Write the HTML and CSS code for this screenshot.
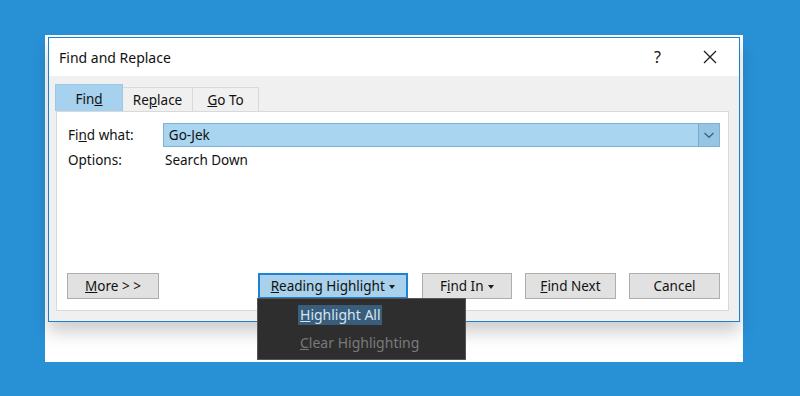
FILE: index.html
```html
<!DOCTYPE html>
<html lang="en">
<head>
    <meta charset="UTF-8">
    <title>Find and Replace</title>
    <link rel="stylesheet" href="styles.css">
</head>
<body>

<div class="canvas">
    <div class="dialog">
        <div class="titlebar">
            <span class="title">Find and Replace</span>
            <span class="help">?</span>
            <span class="close">
                <svg width="14" height="14" viewBox="0 0 14 14"><path d="M1 1L13 13M13 1L1 13" stroke="#1e1e1e" stroke-width="1.3" fill="none"/></svg>
            </span>
        </div>
        <div class="content">
            <div class="tabs">
                <div class="tab active">Fin<u>d</u></div>
                <div class="tab">Re<u>p</u>lace</div>
                <div class="tab"><u>G</u>o To</div>
            </div>
            <div class="panel">
                <div class="row">
                    <span class="label">Fi<u>n</u>d what:</span>
                    <div class="combo">
                        <span class="combo-text">Go-Jek</span>
                        <span class="combo-btn">
                            <svg width="12" height="8" viewBox="0 0 12 8"><path d="M1.5 2L6 6.2L10.5 2" stroke="#3b6584" stroke-width="1.4" fill="none"/></svg>
                        </span>
                    </div>
                </div>
                <div class="row options">
                    <span class="label">Options:</span>
                    <span>Search Down</span>
                </div>
                <div class="buttons">
                    <button class="btn more"><u>M</u>ore &gt; &gt;</button>
                    <div class="menu-wrap">
                        <button class="btn pressed"><u>R</u>eading Highlight <span class="caret"></span></button>
                        <div class="menu">
                            <div class="menu-item"><span class="hl"><u>H</u>ighlight All</span></div>
                            <div class="menu-item disabled"><u>C</u>lear Highlighting</div>
                        </div>
                    </div>
                    <button class="btn find-in">F<u>i</u>nd In <span class="caret"></span></button>
                    <button class="btn"><u>F</u>ind Next</button>
                    <button class="btn">Cancel</button>
                </div>
            </div>
        </div>
    </div>
</div>

</body>
</html>
```

FILE: styles.css
```css
body {
    margin: 0;
    background-color: #2891d6;
    font-family: "Noto Sans", "Open Sans", sans-serif;
    font-size: 13.5px;
    color: #111;
}
.canvas {
    margin: 35px 0 0 45px;
    width: 698px;
    height: 327px;
    background-color: white;
    padding: 2px 0 0 3px;
    box-sizing: border-box;
}
.dialog {
    width: 692px;
    height: 285px;
    box-sizing: border-box;
    border: 1px solid #1c7fd0;
    background-color: #f0f0f0;
    box-shadow: 0 10px 16px rgba(0, 0, 0, 0.2);
}
.titlebar {
    height: 38px;
    background-color: white;
    display: flex;
    align-items: center;
    padding-left: 10px;
}
.title {
    font-size: 14px;
    flex: 1;
}
.help {
    font-size: 16px;
    margin-right: 42px;
}
.close {
    display: flex;
    margin-right: 22px;
}
.content {
    padding: 8px 0 0 6px;
}
.tabs {
    display: flex;
    align-items: flex-end;
    height: 27px;
}
.tab {
    height: 24px;
    box-sizing: border-box;
    border: 1px solid #d9d9d9;
    border-bottom: none;
    border-left: none;
    background-color: #f0f0f0;
    text-align: center;
    line-height: 24px;
    width: 70px;
}
.tab:last-child {
    width: 66px;
}
.tab.active {
    height: 27px;
    width: 68px;
    line-height: 28px;
    background-color: #a7d2ef;
    border: 1px solid #9cc8e6;
    border-bottom: none;
}
.panel {
    width: 673px;
    height: 200px;
    margin-left: 1px;
    box-sizing: border-box;
    background-color: white;
    border: 1px solid #d9d9d9;
    padding: 11px 8px 11px 10px;
    display: flex;
    flex-direction: column;
}
.row {
    display: flex;
    align-items: center;
}
.label {
    width: 95px;
    padding-left: 1px;
}
.options {
    margin-top: 2px;
    height: 22px;
}
.options .label + span {
    padding-left: 2px;
}
.combo {
    width: 558px;
    height: 24px;
    box-sizing: border-box;
    border: 1px solid #7fb1d6;
    background-color: #a9d5f1;
    display: flex;
    align-items: center;
}
.combo-text {
    flex: 1;
    padding-left: 5px;
}
.combo-btn {
    width: 21px;
    height: 22px;
    box-sizing: border-box;
    border-left: 1px solid #7aa9cc;
    background-color: #96c4e3;
    display: flex;
    align-items: center;
    justify-content: center;
}
.buttons {
    margin-top: auto;
    display: flex;
    align-items: center;
    gap: 13px;
}
.btn {
    font-family: inherit;
    font-size: 13.5px;
    color: #111;
    height: 26px;
    width: 91px;
    padding: 0;
    box-sizing: border-box;
    background-color: #e1e1e1;
    border: 1px solid #adadad;
}
.more {
    width: 92px;
    margin-right: auto;
}
.menu-wrap {
    position: relative;
    margin-right: 1px;
}
.pressed {
    width: 150px;
    background-color: #a9d1ec;
    border: 2px solid #1e82d6;
}
.find-in {
    width: 90px;
}
.caret {
    display: inline-block;
    border-left: 3.5px solid transparent;
    border-right: 3.5px solid transparent;
    border-top: 4px solid #1e1e1e;
    vertical-align: middle;
    margin-left: 1px;
}
.menu {
    position: absolute;
    left: -1px;
    top: 25px;
    width: 209px;
    height: 62px;
    box-sizing: border-box;
    background-color: #2e2e2e;
    border: 1px solid #565656;
    padding-top: 6px;
}
.menu-item {
    height: 28px;
    line-height: 20px;
    padding-left: 40px;
    font-size: 14px;
    color: #d2e6f5;
}
.hl {
    display: inline-block;
    background-color: #3a5d7b;
    padding: 0 1px 0 2px;
}
.menu-item.disabled {
    color: #7a7a7a;
    padding-left: 42px;
}
```
